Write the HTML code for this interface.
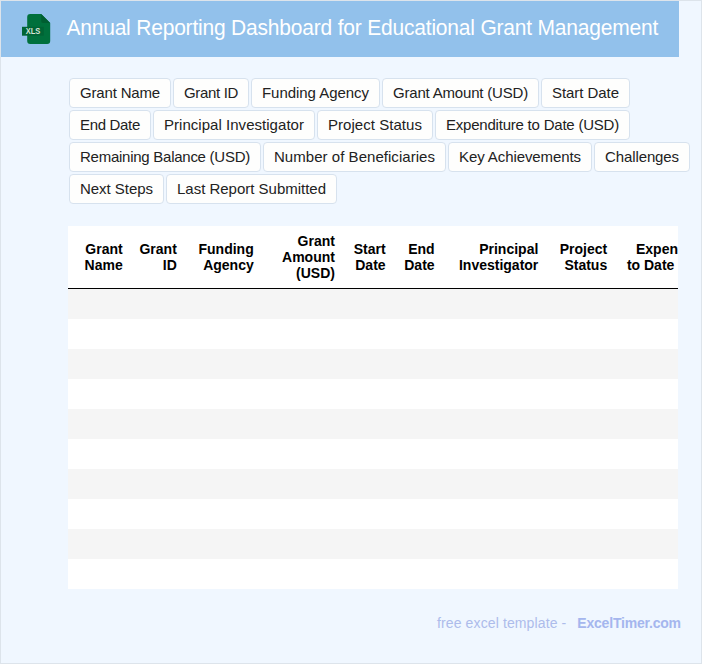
<!DOCTYPE html>
<html lang="en">
<head>
<meta charset="utf-8">
<title>Annual Reporting Dashboard for Educational Grant Management</title>
<style>
*{box-sizing:border-box;margin:0;padding:0}
html,body{width:702px;height:664px;overflow:hidden}
body{position:relative;background:#f0f7ff;font-family:"Liberation Sans",Arial,sans-serif;color:#222}
#frame{position:absolute;left:0;top:0;width:702px;height:664px;border:1px solid #dde4eb;pointer-events:none}
#hdr{position:absolute;left:1px;top:1px;width:678px;height:56px;background:#92c1eb}
#title{position:absolute;left:65.4px;top:14px;height:26px;line-height:26px;font-size:21px;letter-spacing:-0.2px;color:#fff;white-space:nowrap;transform-origin:0 78%;transform:scaleY(1.05)}
#icon{position:absolute;left:20px;top:12px;width:32px;height:34px}
.tag{position:absolute;height:30px;line-height:28px;border:1px solid #d7e2ee;border-radius:4px;background:#fefefd;font-size:15px;color:#222;text-align:center;white-space:nowrap;overflow:hidden}
.tag span{display:inline-block;transform-origin:50% 80%}
#tbl{position:absolute;left:68px;top:226px;width:610px;height:363px;background:#fff;overflow:hidden}
#tbl .hl{position:absolute;left:0;top:62px;width:900px;height:1px;background:#000}
#tbl .r{position:absolute;left:0;width:900px;height:30px;background:#f5f5f5}
.th{position:absolute;font-weight:bold;font-size:14px;line-height:16px;color:#000;text-align:right;white-space:nowrap}
#foot{letter-spacing:0.12px;position:absolute;top:613px;height:20px;line-height:20px;font-size:14px;color:#adbceb;white-space:nowrap}
</style>
</head>
<body>
<div id="hdr">
<svg id="icon" viewBox="0 0 32 34">
<path d="M9.2 1 H20.2 L29.2 10.1 V27.9 a3 3 0 0 1 -3 3 H9.2 a3 3 0 0 1 -3 -3 V4 a3 3 0 0 1 3 -3 z" fill="#00703c"/>
<path d="M20.2 1 L29.2 10.1 H22.4 a2.2 2.2 0 0 1 -2.2 -2.2 z" fill="#005e31"/>
<rect x="1" y="13.8" width="21.8" height="8.9" fill="#006435"/>
<text x="12" y="21.4" font-family="Liberation Sans, Arial, sans-serif" font-weight="bold" font-size="9.2" fill="#d6e4d8" text-anchor="middle" textLength="14.6" lengthAdjust="spacingAndGlyphs">XLS</text>
</svg>
<div id="title">Annual Reporting Dashboard for Educational Grant Management</div>
</div>





<div class="tag" style="left:69px;top:78px;width:102px"><span style="letter-spacing:-0.170px">Grant Name</span></div>
<div class="tag" style="left:173px;top:78px;width:76px"><span style="letter-spacing:-0.340px">Grant ID</span></div>
<div class="tag" style="left:251px;top:78px;width:129px"><span style="letter-spacing:-0.041px">Funding Agency</span></div>
<div class="tag" style="left:382px;top:78px;width:157px"><span style="letter-spacing:-0.188px">Grant Amount (USD)</span></div>
<div class="tag" style="left:541px;top:78px;width:89px"><span style="letter-spacing:-0.053px">Start Date</span></div>
<div class="tag" style="left:69px;top:110px;width:82px"><span style="letter-spacing:-0.318px">End Date</span></div>
<div class="tag" style="left:153px;top:110px;width:162px"><span style="letter-spacing:0.035px">Principal Investigator</span></div>
<div class="tag" style="left:317px;top:110px;width:116px"><span style="letter-spacing:0.044px">Project Status</span></div>
<div class="tag" style="left:435px;top:110px;width:195px"><span style="letter-spacing:-0.217px">Expenditure to Date (USD)</span></div>
<div class="tag" style="left:69px;top:142px;width:192px"><span style="letter-spacing:-0.257px">Remaining Balance (USD)</span></div>
<div class="tag" style="left:263px;top:142px;width:183px"><span style="letter-spacing:0.040px">Number of Beneficiaries</span></div>
<div class="tag" style="left:448px;top:142px;width:144px"><span style="letter-spacing:-0.088px">Key Achievements</span></div>
<div class="tag" style="left:594px;top:142px;width:96px"><span style="letter-spacing:-0.106px">Challenges</span></div>
<div class="tag" style="left:69px;top:174px;width:95px"><span style="letter-spacing:-0.037px">Next Steps</span></div>
<div class="tag" style="left:166px;top:174px;width:171px"><span style="letter-spacing:-0.012px">Last Report Submitted</span></div>
<div id="tbl">
<div class="r" style="top:63px"></div>
<div class="r" style="top:123px"></div>
<div class="r" style="top:183px"></div>
<div class="r" style="top:243px"></div>
<div class="r" style="top:303px"></div>
<div class="hl"></div>
<div class="th" style="right:555.3px;top:15px">Grant<br>Name</div>
<div class="th" style="right:501.2px;top:15px">Grant<br>ID</div>
<div class="th" style="right:424.3px;top:15px">Funding<br>Agency</div>
<div class="th" style="right:343.1px;top:7px">Grant<br>Amount<br>(USD)</div>
<div class="th" style="right:292.4px;top:15px">Start<br>Date</div>
<div class="th" style="right:243.4px;top:15px">End<br>Date</div>
<div class="th" style="right:139.7px;top:15px">Principal<br>Investigator</div>
<div class="th" style="right:70.8px;top:15px">Project<br>Status</div>
<div class="th" style="left:558.9px;top:15px;width:90px">Expenditure<br>to Date (USD)</div>
</div>

<div id="foot" style="left:437px">free excel template -</div>
<div id="foot2" style="position:absolute;left:577.3px;top:613px;height:20px;line-height:20px;font-size:14px;font-weight:bold;letter-spacing:-0.2px;color:#a5b6ee;white-space:nowrap">ExcelTimer.com</div>
<div id="frame"></div>
</body>
</html>
